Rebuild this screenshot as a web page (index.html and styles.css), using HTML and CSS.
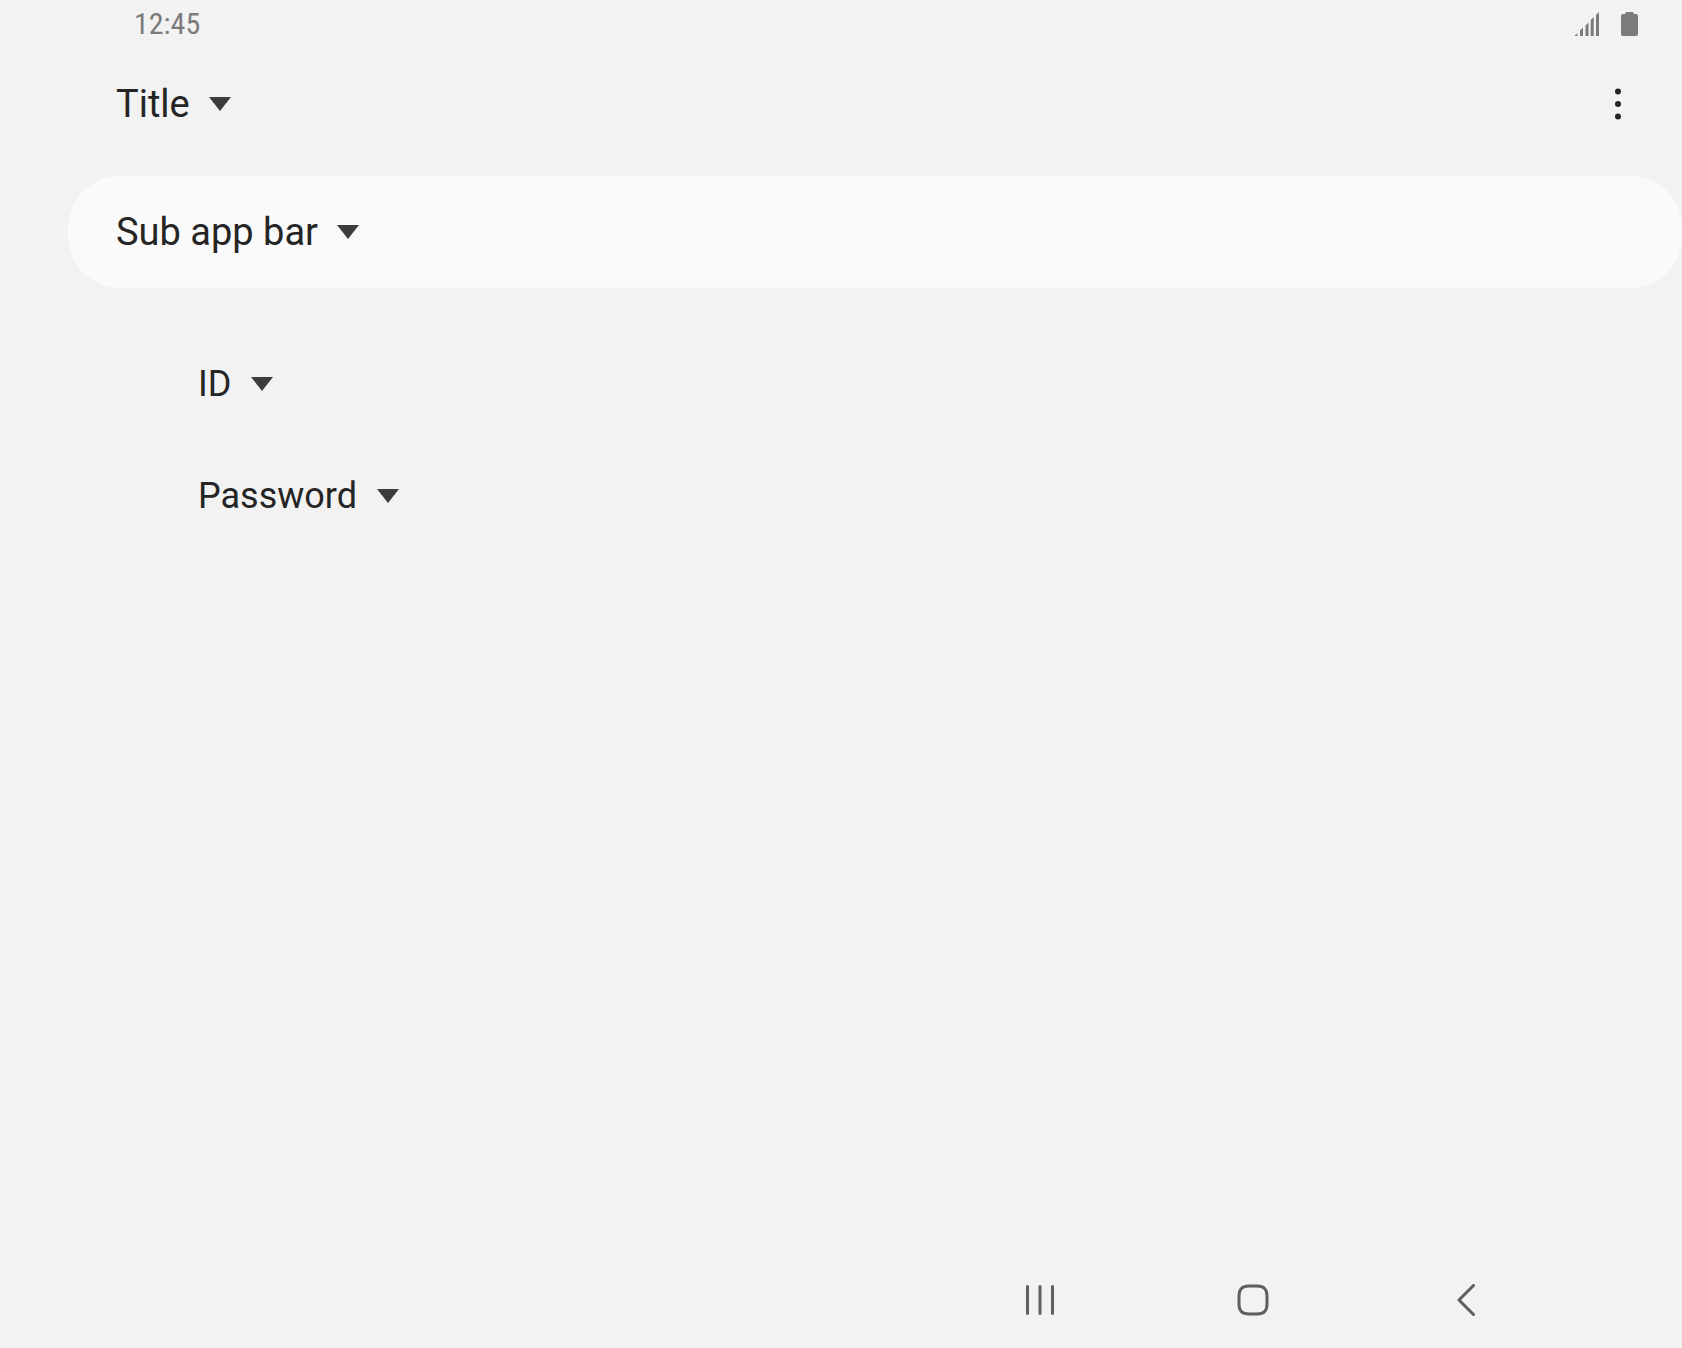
FILE: index.html
```html
<!DOCTYPE html>
<html lang="en">
<head>
<meta charset="utf-8">
<meta name="viewport" content="width=device-width, initial-scale=1">
<title>Title</title>
<link rel="stylesheet" href="styles.css">
</head>
<body>
<header class="status-bar">
  <time class="clock" datetime="12:45">12:45</time>
  <div class="indicators">
    <svg class="signal" viewBox="0 0 24 24" aria-hidden="true"><path d="M0 24V23L2.500 21.500V24ZM5 24V18.500L8 15.500V24ZM10.500 24V13.500L13.500 10.500V24ZM15.700 24V8L18.700 5V24ZM21 24V3L24 0V24Z"/></svg>
    <svg class="battery" viewBox="0 0 17 24" aria-hidden="true"><path d="M5.500 0h6q1 0 1.500 2H15q2 0 2 2v18q0 2-2 2H2q-2 0-2-2V4q0-2 2-2h2q.5-2 1.500-2Z"/></svg>
  </div>
</header>
<main class="content">
  <div class="app-bar">
    <div class="spinner">
      <select class="spinner-select" aria-label="Title"><option>Title</option></select>
      <svg class="caret" viewBox="0 0 22 14" aria-hidden="true"><path d="M0 0H22L11 14Z"/></svg>
    </div>
    <button class="more" type="button" aria-label="More options">
      <svg class="more-icon" viewBox="0 0 6 32" aria-hidden="true"><circle cx="3" cy="3.500" r="3"/><circle cx="3" cy="16" r="3"/><circle cx="3" cy="28.500" r="3"/></svg>
    </button>
  </div>
  <div class="sub-app-bar">
    <div class="spinner">
      <select class="spinner-select" aria-label="Sub app bar"><option>Sub app bar</option></select>
      <svg class="caret" viewBox="0 0 22 14" aria-hidden="true"><path d="M0 0H22L11 14Z"/></svg>
    </div>
  </div>
  <div class="fields">
    <div class="field">
      <div class="spinner">
        <select class="spinner-select small" aria-label="ID"><option>ID</option></select>
        <svg class="caret" viewBox="0 0 22 14" aria-hidden="true"><path d="M0 0H22L11 14Z"/></svg>
      </div>
    </div>
    <div class="field">
      <div class="spinner">
        <select class="spinner-select small" aria-label="Password"><option>Password</option></select>
        <svg class="caret" viewBox="0 0 22 14" aria-hidden="true"><path d="M0 0H22L11 14Z"/></svg>
      </div>
    </div>
  </div>
</main>
<nav class="nav-bar" aria-label="System">
  <button class="nav-button" type="button" aria-label="Recents"><svg class="nav-icon" viewBox="0 0 32 32" aria-hidden="true"><path d="M3.500 2.500v27M16 2.500v27M28.500 2.500v27"/></svg></button>
  <button class="nav-button" type="button" aria-label="Home"><svg class="nav-icon" viewBox="0 0 32 32" aria-hidden="true"><path d="M12 2H20C27 2 30 5 30 12V20C30 27 27 30 20 30H12C5 30 2 27 2 20V12C2 5 5 2 12 2Z"/></svg></button>
  <button class="nav-button" type="button" aria-label="Back"><svg class="nav-icon" viewBox="0 0 32 32" aria-hidden="true"><path d="M23.500 1.500L9 16L23.500 30.500"/></svg></button>
</nav>
</body>
</html>
```
FILE: styles.css
```css
* {
  box-sizing: border-box;
}

body {
  margin: 0;
  min-height: 100vh;
  display: flex;
  flex-direction: column;
  background: #f2f2f2;
  color: #252525;
  font-family: Roboto, sans-serif;
}

button {
  padding: 0;
  border: 0;
  background: none;
}

svg {
  display: block;
}

.status-bar {
  display: flex;
  justify-content: space-between;
  align-items: center;
  height: 48px;
  padding: 0 44px 0 134px;
  color: #7b7b7b;
}

.clock {
  font-family: "Roboto Condensed", Roboto, sans-serif;
  font-size: 30px;
  line-height: 48px;
}

.indicators {
  display: flex;
  gap: 22px;
  fill: #7b7b7b;
}

.signal {
  width: 24px;
  height: 24px;
}

.battery {
  width: 17px;
  height: 24px;
}

.content {
  flex: 1;
  padding-left: 68px;
}

.app-bar {
  display: flex;
  justify-content: space-between;
  align-items: center;
  height: 112px;
  padding: 0 40px 0 48px;
}

.sub-app-bar {
  display: flex;
  align-items: center;
  height: 112px;
  margin-top: 16px;
  padding-left: 48px;
  border-radius: 52px;
  background: #fafafa;
}

.fields {
  padding: 40px 0 0 130px;
}

.field {
  display: flex;
  align-items: center;
  height: 112px;
}

.spinner {
  display: grid;
  align-items: center;
}

.spinner > * {
  grid-area: 1 / 1;
}

.spinner-select {
  appearance: none;
  margin: 0;
  padding: 0 41px 0 0;
  border: 0;
  background: none;
  color: inherit;
  font-family: inherit;
  font-size: 38px;
  line-height: 48px;
}

.small {
  font-size: 36px;
}

.caret {
  justify-self: end;
  width: 22px;
  height: 14px;
  fill: #3c3c3c;
  pointer-events: none;
}

.more {
  display: grid;
  place-items: center;
  width: 48px;
  height: 48px;
}

.more-icon {
  width: 6px;
  height: 32px;
  fill: #252525;
}

.nav-bar {
  display: flex;
  justify-content: flex-end;
  height: 96px;
  padding-right: 110px;
}

.nav-button {
  display: grid;
  place-items: center;
  width: 213px;
}

.nav-icon {
  width: 32px;
  height: 32px;
  fill: none;
  stroke: #5f5f5f;
  stroke-width: 3px;
  stroke-linecap: round;
  stroke-linejoin: round;
}
```
